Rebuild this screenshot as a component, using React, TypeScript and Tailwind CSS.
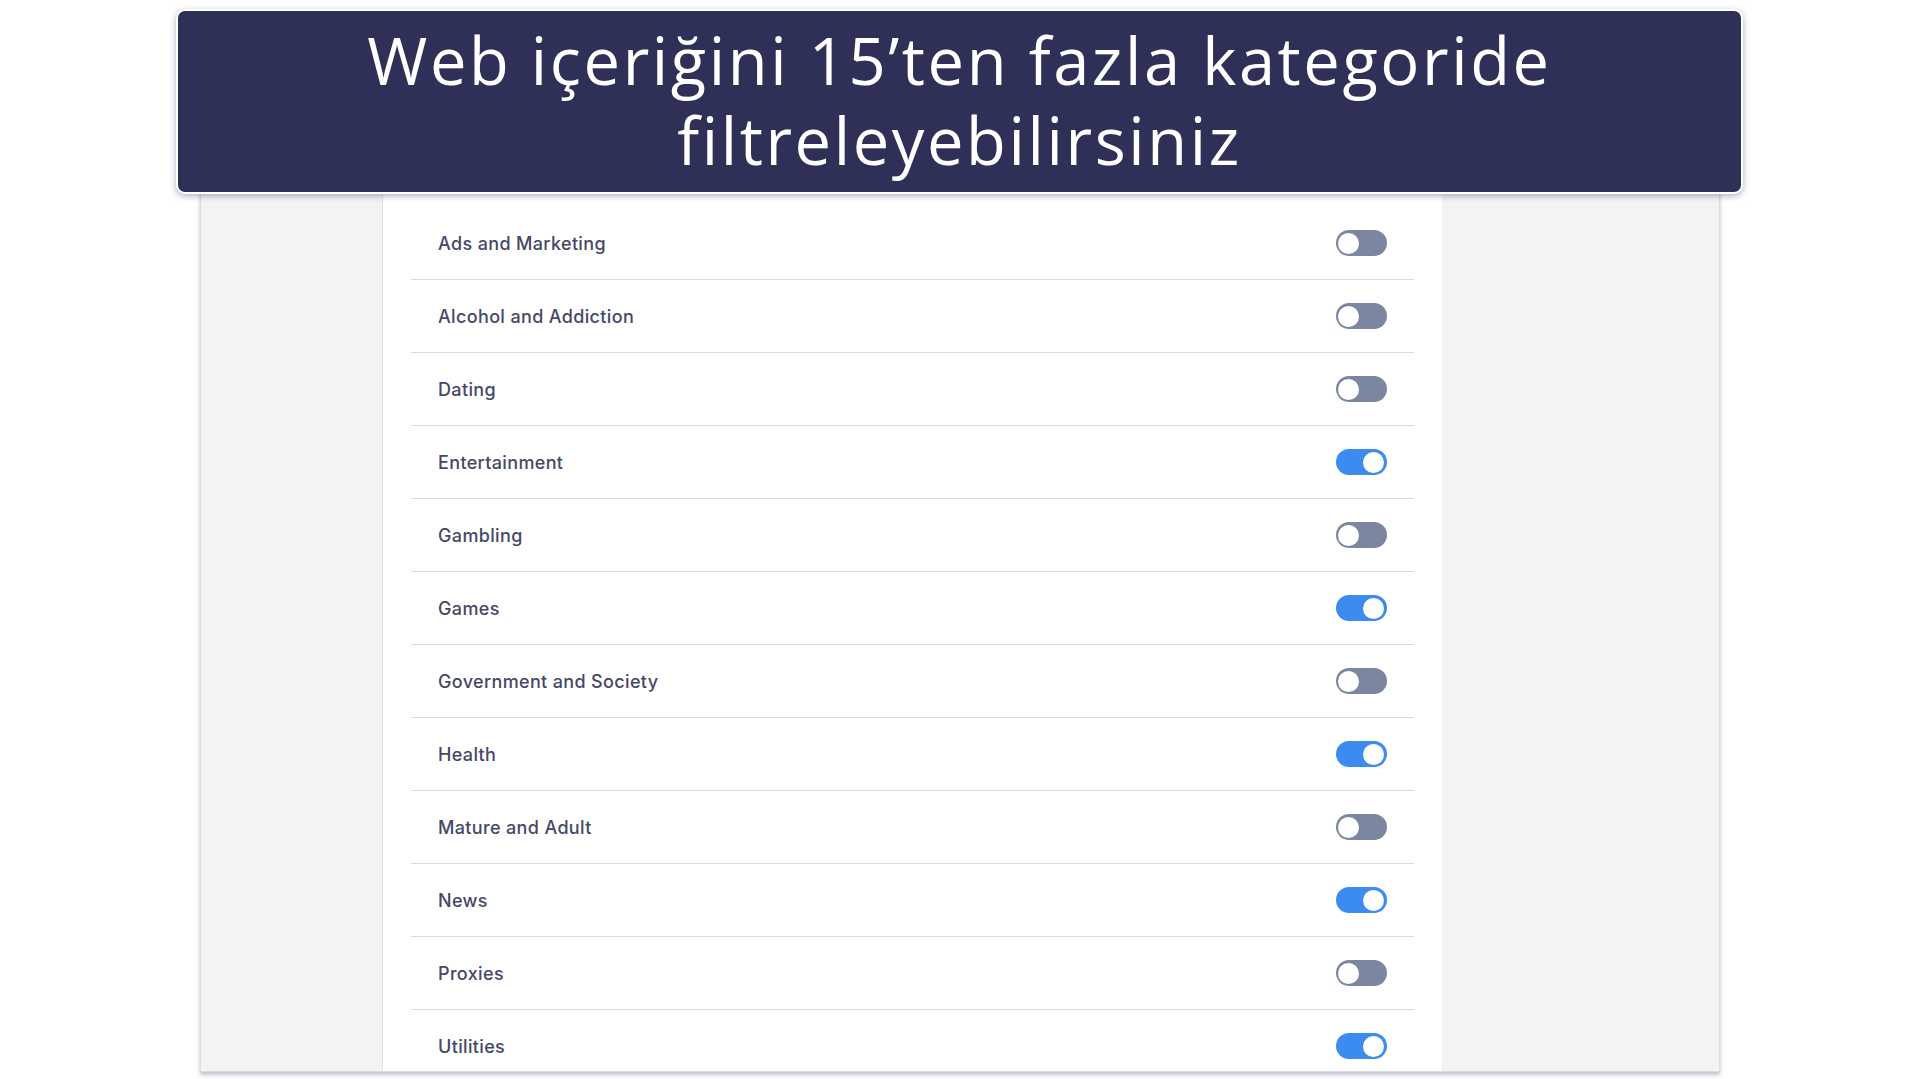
import React from "react";

const categories: { label: string; on: boolean }[] = [
  { label: "Ads and Marketing", on: false },
  { label: "Alcohol and Addiction", on: false },
  { label: "Dating", on: false },
  { label: "Entertainment", on: true },
  { label: "Gambling", on: false },
  { label: "Games", on: true },
  { label: "Government and Society", on: false },
  { label: "Health", on: true },
  { label: "Mature and Adult", on: false },
  { label: "News", on: true },
  { label: "Proxies", on: false },
  { label: "Utilities", on: true },
];

function Toggle({ on }: { on: boolean }) {
  return (
    <div
      className={
        on
          ? "w-[51px] h-[26px] rounded-full bg-[#3b8bf1] flex items-center justify-end pr-[3px]"
          : "w-[51px] h-[26px] rounded-full bg-[#7b86a0] flex items-center justify-start pl-[2px]"
      }
    >
      <div className="w-[21px] h-[21px] rounded-full bg-white" />
    </div>
  );
}

export default function App() {
  return (
    <div
      className="relative w-full h-[1079px] overflow-hidden bg-white"
      style={{ fontFamily: "Inter, 'Noto Sans', sans-serif" }}
    >
      {/* screenshot panel */}
      <div className="ml-[200px] mt-[186px] w-[1520px] h-[886px] bg-[#f3f3f3] border border-[#dcdde3] shadow-[0_3px_4px_rgba(120,125,160,0.45)] flex overflow-hidden">
        <div className="ml-[181px] w-[1060px] h-full bg-white border-l border-[#e2e3e8] px-[28px] pt-[20px]">
          {categories.map((c) => (
            <div
              key={c.label}
              className="h-[73px] border-b border-[#d9dae2] flex items-center justify-between px-[27px]"
            >
              <span className="text-[18px] font-medium text-[#454866] tracking-[0.35px]">
                {c.label}
              </span>
              <Toggle on={c.on} />
            </div>
          ))}
        </div>
      </div>

      {/* title banner */}
      <div className="absolute left-[176px] top-[9px] w-[1567px] h-[185px] rounded-[9px] bg-[#2f3057] border-2 border-white shadow-[0_2px_6px_rgba(90,95,140,0.5)] flex flex-col items-center justify-center pb-[4px]">
        <div
          className="text-white text-[65px] leading-[80px] text-center tracking-[2.6px]"
          style={{ fontFamily: "'Open Sans', Lato, sans-serif" }}
        >
          <div>Web içeriğini 15’ten fazla kategoride</div>
          <div>filtreleyebilirsiniz</div>
        </div>
      </div>
    </div>
  );
}
